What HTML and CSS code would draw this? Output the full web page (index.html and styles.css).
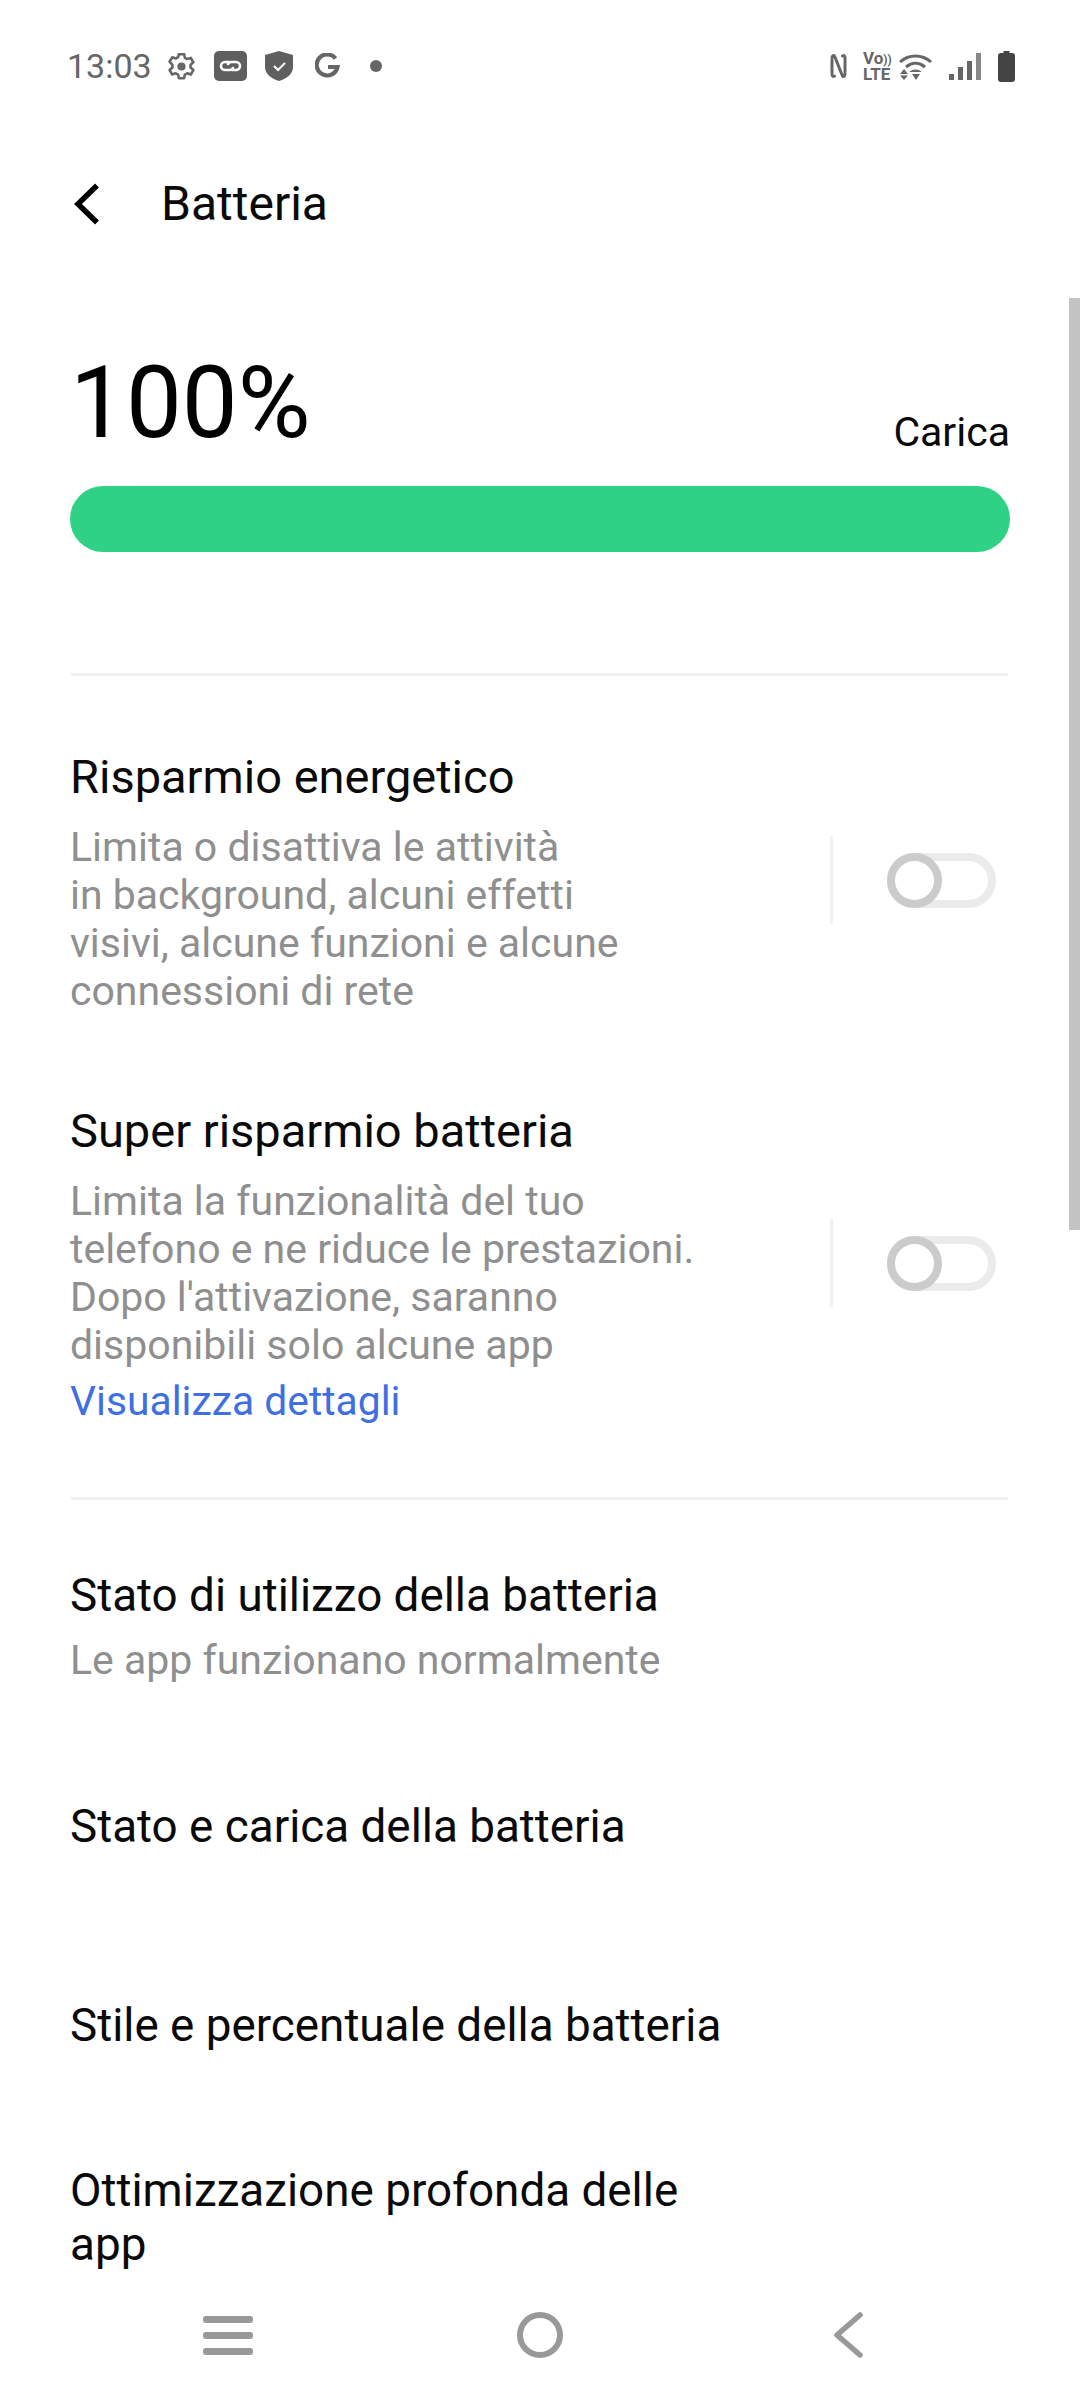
FILE: index.html
```html
<!DOCTYPE html>
<html lang="it">
<head>
<meta charset="utf-8">
<title>Batteria</title>
<link rel="stylesheet" href="styles.css">
</head>
<body>
<div class="phone">
  <div class="statusbar">
    <div class="status-left">
      <span class="time">13:03</span>
      <svg class="ic-gear" viewBox="2 1.500 24 25" width="27" height="27"><path d="M11.600 2.500h4.800l.7 3.400 2.200 1.200 3.300-1.100 2.400 4.100-2.600 2.300v2.600l2.600 2.300-2.400 4.100-3.300-1.100-2.200 1.200-.7 3.400h-4.800l-.7-3.400-2.200-1.200-3.300 1.100-2.400-4.100 2.600-2.300v-2.600L3 9.600l2.400-4.100 3.300 1.100 2.200-1.200z" fill="none" stroke="#666" stroke-width="2.400" stroke-linejoin="round"/><circle cx="14" cy="14" r="3.800" fill="#666"/></svg>
      <svg class="ic-link" viewBox="0 0 33 30" width="33" height="30"><rect width="33" height="30" rx="5" fill="#5f5f5f"/><path d="M15 11h-4a4 4 0 0 0 0 8h5a4 4 0 0 0 3-2M18 19h4a4 4 0 0 0 0-8h-5a4 4 0 0 0-3 2" fill="none" stroke="#fff" stroke-width="2.600" stroke-linecap="round"/></svg>
      <svg class="ic-shield" viewBox="0 0 28 30" width="28" height="30"><path d="M14 0l14 4v12c0 7-6 11.500-14 14C6 27.500 0 23 0 16V4z" fill="#5f5f5f"/><path d="M9 15l4 4 7-7" fill="none" stroke="#fff" stroke-width="2"/></svg>
      <svg class="ic-g" viewBox="0 0 25 26" width="25" height="26"><path d="M20.500 5.500A10.500 10.500 0 1 0 22.500 14H13" fill="none" stroke="#666" stroke-width="4.200"/></svg>
      <span class="dot"></span>
    </div>
    <div class="status-right">
      <svg class="ic-nfc" viewBox="0 0 17 26" width="17" height="26"><path d="M2 7v14c0 2 1 3 2.500 2M4 2.500c-1 0-2 1-2 3M4.500 3l8 20M15 19V5c0-2-1-3-2.500-2M13 23.500c1 0 2-1 2-3" fill="none" stroke="#666" stroke-width="3" stroke-linecap="round"/></svg>
      <div class="volte"><span class="vo">Vo<i>))</i></span><span class="lte">LTE</span></div>
      <svg class="ic-wifi" viewBox="0 0 33 27" width="33" height="27"><path d="M1 9c9-8 22-8 31 0M7 14c6-5 13-5 19 0" fill="none" stroke="#666" stroke-width="3"/><path d="M16.500 16.500c-3 0-5 1-6 2.500h12c-1-1.500-3-2.500-6-2.500zM13 21h8l-4 6zM1 21l4-5 4 5zM1 22.500h8l-4 4.500z" fill="#666"/></svg>
      <svg class="ic-signal" viewBox="0 0 32 27" width="32" height="27"><path d="M0 21h5v6H0z" fill="#666"/><path d="M9 14h5v13H9z" fill="#666"/><path d="M18 8h5v19h-5z" fill="#666"/><path d="M27 0h5v27h-5z" fill="#888"/></svg>
      <svg class="ic-batt" viewBox="0 0 17 31" width="17" height="31"><path d="M5.500 0h6v2H14a3 3 0 0 1 3 3v23a3 3 0 0 1-3 3H3a3 3 0 0 1-3-3V5a3 3 0 0 1 3-3h2.500z" fill="#444"/></svg>
    </div>
  </div>

  <div class="topbar">
    <svg class="ic-back" viewBox="0 0 26 42" width="26" height="42"><path d="M24 2.500L5 21l19 18.500" fill="none" stroke="#000" stroke-width="5.500"/></svg>
    <h1 class="title">Batteria</h1>
  </div>

  <div class="scrollthumb"></div>

  <main class="content">
    <section class="battery">
      <div class="battery-head">
        <span class="percent">100%</span>
        <span class="state">Carica</span>
      </div>
      <div class="bar"></div>
    </section>

    <div class="divider div-1"></div>

    <div class="switch-row row-saver">
      <div class="text">
        <div class="item-title big">Risparmio energetico</div>
        <div class="item-sub sub-saver">Limita o disattiva le attività<br>in background, alcuni effetti<br>visivi, alcune funzioni e alcune<br>connessioni di rete</div>
      </div>
      <div class="toggle-wrap"><span class="sep"></span><span class="toggle"></span></div>
    </div>

    <div class="switch-row row-super">
      <div class="text">
        <div class="item-title big">Super risparmio batteria</div>
        <div class="item-sub sub-super">Limita la funzionalità del tuo<br>telefono e ne riduce le prestazioni.<br>Dopo l'attivazione, saranno<br>disponibili solo alcune app</div>
        <div class="link">Visualizza dettagli</div>
      </div>
      <div class="toggle-wrap wrap-super"><span class="sep"></span><span class="toggle"></span></div>
    </div>

    <div class="divider"></div>

    <div class="item item-usage">
      <div class="item-title">Stato di utilizzo della batteria</div>
      <div class="item-sub sub-usage">Le app funzionano normalmente</div>
    </div>
    <div class="item item-health"><div class="item-title">Stato e carica della batteria</div></div>
    <div class="item item-style"><div class="item-title">Stile e percentuale della batteria</div></div>
    <div class="item item-deep"><div class="item-title multi">Ottimizzazione profonda delle<br>app</div></div>
  </main>

  <nav class="navbar">
    <span class="nav-menu"><i></i><i></i><i></i></span>
    <span class="nav-home"></span>
    <svg class="nav-back" viewBox="0 0 32 46" width="32" height="46"><path d="M28 3L5 23l23 20" fill="none" stroke="#999" stroke-width="5.500" stroke-linecap="round" stroke-linejoin="round"/></svg>
  </nav>
</div>
</body>
</html>
```
FILE: styles.css
```css
* , *::before { box-sizing: border-box; }
html, body { margin: 0; padding: 0; background: #fff; }
body { font-family: Roboto, "Noto Sans", sans-serif; }
.phone { position: relative; width: 1080px; height: 2392px; overflow: hidden; background: #fff; }

.statusbar { height: 149px; padding: 44px 0 0 67px; display: flex; justify-content: space-between; align-items: flex-start; }
.status-left { display: flex; align-items: center; height: 44px; color: #666; }
.time { font-size: 34px; line-height: 44px; width: 101px; color: #666; }
.ic-gear { margin-right: 19px; }
.ic-link { margin-right: 18px; }
.ic-shield { margin-right: 22px; }
.ic-g { margin-right: 30px; }
.dot { width: 12px; height: 12px; border-radius: 50%; background: #666; }
.status-right { display: flex; align-items: center; height: 44px; margin-right: 65px; }
.ic-nfc { margin-right: 16px; }
.volte { width: 27px; display: flex; flex-direction: column; font-weight: 700; color: #666; margin-right: 9px; }
.vo { font-size: 17px; line-height: 14px; white-space: nowrap; }
.vo i { font-style: normal; font-size: 12px; }
.lte { font-size: 17px; line-height: 14px; }
.ic-signal { margin-left: 17px; margin-right: 17px; }

.topbar { height: 110px; display: flex; align-items: center; padding-left: 73px; }
.ic-back { margin-right: 62px; }
.title { margin: 0; font-size: 48px; font-weight: 400; color: #0a0a0a; line-height: 60px; }

.scrollthumb { position: absolute; right: 0; top: 298px; width: 11px; height: 932px; background: #c4c4c4; }

.content { padding: 0 70px; }
.battery { height: 292px; }
.battery-head { display: flex; justify-content: space-between; align-items: flex-end; height: 227px; padding-bottom: 25px; }
.percent { font-size: 99.500px; line-height: 115px; color: #000; }
.state { font-size: 41px; line-height: 46px; color: #0a0a0a; margin-bottom: 6px; }
.bar { height: 66px; background: #2fd184; border-radius: 33px; margin-bottom: -1px; }
.divider { height: 3px; background: #f0f0f0; width: 937px; margin-left: 1px; }
.div-1 { margin-top: 122px; }

.switch-row { display: flex; justify-content: space-between; align-items: flex-start; }
.row-saver { height: 424px; padding-top: 71px; }
.row-super { height: 397px; padding-top: 1px; }
.text { width: 700px; }
.item-title { font-size: 45.800px; line-height: 60px; color: #0a0a0a; }
.item-title.big { font-size: 47px; }
.item-title.multi { line-height: 54px; }
.item-sub { font-size: 41px; line-height: 48px; color: #8f8f8f; }
.sub-saver { margin-top: 16px; }
.sub-super { margin-top: 16px; }
.sub-usage { margin-top: 10px; }
.link { font-size: 40.800px; line-height: 48px; margin-top: 8px; color: #3f6fe0; }

.toggle-wrap { display: flex; align-items: center; height: 88px; margin-top: 89px; margin-right: 14px; }
.wrap-super { margin-top: 118px; }
.sep { width: 3px; height: 88px; background: #f0f0f0; margin-right: 54px; }
.toggle { position: relative; display: block; width: 109px; height: 55px; border: 8px solid #ebebeb; border-radius: 28px; }
.toggle::before { content: ""; position: absolute; left: -8px; top: -8px; width: 55px; height: 55px; border: 8px solid #cbcbcb; border-radius: 50%; background: #fff; }

.item-usage { height: 216px; padding-top: 66px; }
.item-health { height: 198px; padding-top: 81px; }
.item-style { height: 249px; padding-top: 82px; }
.item-deep { padding-top: 1px; }

.navbar { position: absolute; left: 0; right: 0; bottom: 0; height: 114px; display: flex; align-items: center; background: #fff; padding-left: 203px; }
.nav-menu { display: flex; flex-direction: column; gap: 9px; width: 50px; }
.nav-menu i { display: block; height: 7px; border-radius: 3px; background: #999; }
.nav-home { width: 46px; height: 46px; border: 6px solid #999; border-radius: 50%; margin-left: 264px; }
.nav-back { margin-left: 269px; }
```
